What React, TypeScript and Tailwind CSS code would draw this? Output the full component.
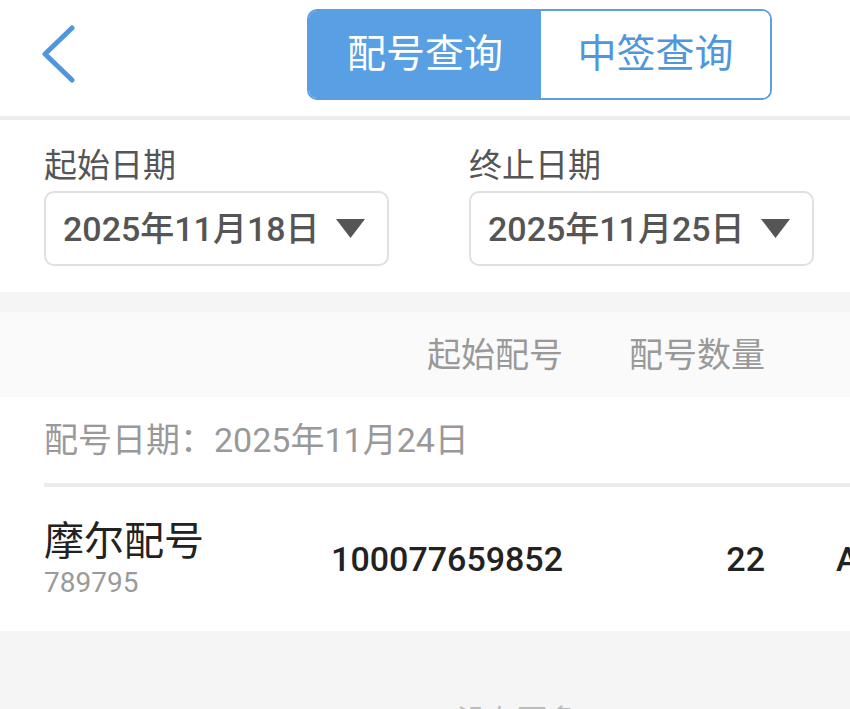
function DateBox({ label, value }: { label: string; value: string }) {
  return (
    <div className="flex w-[345px] flex-col">
      <div className="flex h-[40px] items-center text-[33px] leading-none text-[#555]">{label}</div>
      <div className="mt-[6px] flex h-[75px] items-center justify-between rounded-[10px] border-2 border-[#e0e0e0] pl-[17px] pr-[22px]">
        <span className="text-[34px] font-medium leading-none text-[#555]">{value}</span>
        <svg width="29" height="19" viewBox="0 0 29 19">
          <path d="M0 0 H29 L14.5 19 Z" fill="#555" />
        </svg>
      </div>
    </div>
  )
}

export default function App() {
  return (
    <div className="flex h-[709px] w-[850px] flex-col overflow-hidden bg-[#f5f5f5] font-['Roboto','Noto_Sans_CJK_SC',sans-serif]">
      {/* top bar */}
      <div className="relative flex h-[120px] shrink-0 items-start border-b-4 border-[#ececec] bg-white">
        <div className="flex h-[108px] w-[307px] items-center pl-[41px]">
          <svg width="36" height="58" viewBox="0 0 36 58">
            <path d="M31 3 L4 29 L31 55" fill="none" stroke="#4f96dc" strokeWidth="5" strokeLinecap="round" strokeLinejoin="round" />
          </svg>
        </div>
        <div className="mt-[9px] flex h-[91px] w-[465px] overflow-hidden rounded-[10px] border-2 border-[#5b9fe0]">
          <div className="flex w-[232px] items-center justify-center bg-[#589fe3] text-[39px] leading-none text-white">
            配号查询
          </div>
          <div className="flex flex-1 items-center justify-center bg-white text-[39px] leading-none text-[#4f96dc]">
            中签查询
          </div>
        </div>
      </div>

      {/* dates */}
      <div className="flex h-[172px] shrink-0 gap-[80px] bg-white pl-[44px] pt-[25px]">
        <DateBox label="起始日期" value="2025年11月18日" />
        <DateBox label="终止日期" value="2025年11月25日" />
      </div>

      <div className="h-[20px] shrink-0" />

      {/* table header */}
      <div className="flex h-[85px] shrink-0 items-center overflow-hidden whitespace-nowrap bg-[#fafafa] pl-[44px] text-[34px] leading-none text-[#999]">
        <div className="w-[246px] shrink-0" />
        <div className="w-[273px] shrink-0 text-right">起始配号</div>
        <div className="w-[202px] shrink-0 text-right">配号数量</div>
      </div>

      {/* group */}
      <div className="flex shrink-0 flex-col bg-white">
        <div className="flex h-[86px] items-center pl-[44px] text-[34px] leading-none text-[#999]">
          配号日期：2025年11月24日
        </div>
        <div className="ml-[44px] h-[4px] bg-[#ebebeb]" />
        <div className="flex h-[144px] items-center overflow-hidden whitespace-nowrap pl-[44px]">
          <div className="flex w-[246px] shrink-0 flex-col">
            <span className="h-[40px] text-[40px] leading-[40px] text-[#222]">摩尔配号</span>
            <span className="mt-[7px] h-[28px] text-[28px] leading-[28px] text-[#9a9a9a]">789795</span>
          </div>
          <div className="w-[273px] shrink-0 text-right text-[34px] font-medium leading-none text-[#222]">
            100077659852
          </div>
          <div className="w-[202px] shrink-0 text-right text-[34px] font-medium leading-none text-[#222]">22</div>
          <div className="shrink-0 pl-[71px] text-[34px] font-medium leading-none text-[#222]">A股</div>
        </div>
      </div>

      {/* footer */}
      <div className="flex flex-1 flex-col pl-[184px] pt-[75px]">
        <div className="text-center text-[30px] leading-none text-[#bbb]">没有更多</div>
      </div>
    </div>
  )
}
